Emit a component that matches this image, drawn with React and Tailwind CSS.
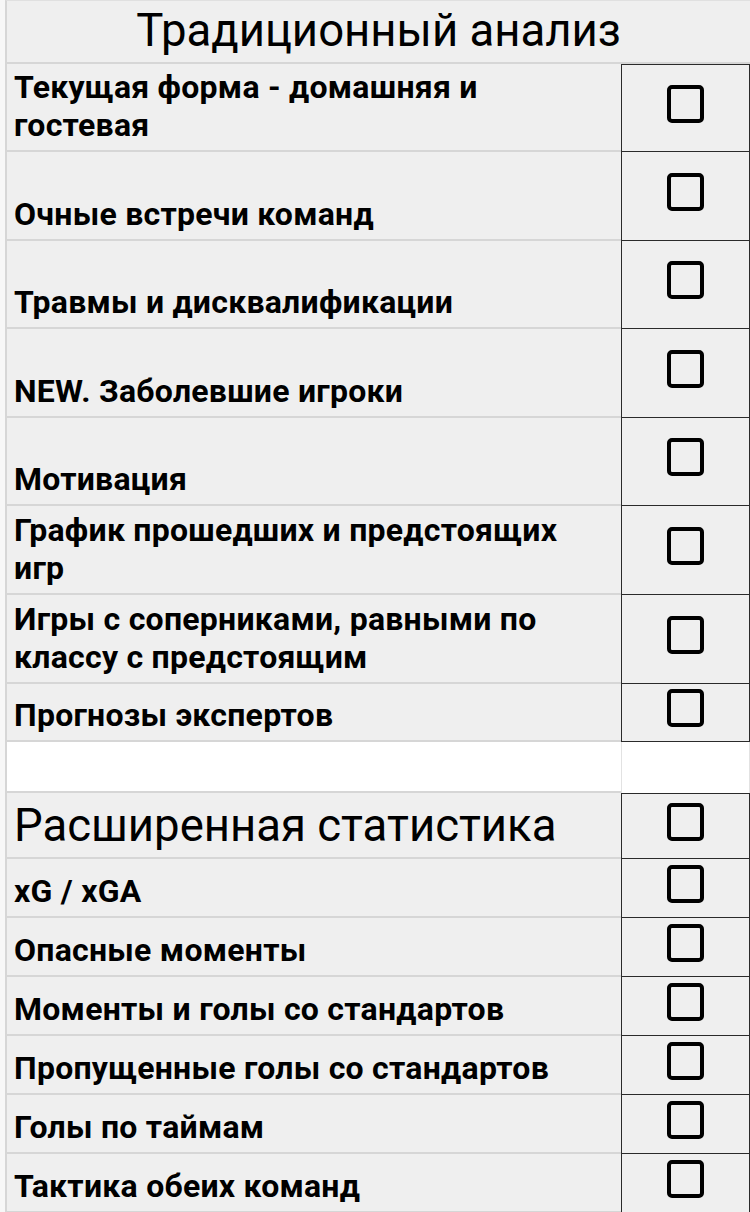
import React from 'react';

const traditional = [
  { label: 'Текущая форма - домашняя и гостевая', h: 'h-[88px]' },
  { label: 'Очные встречи команд', h: 'h-[89px]' },
  { label: 'Травмы и дисквалификации', h: 'h-[88px]' },
  { label: 'NEW. Заболевшие игроки', h: 'h-[89px]' },
  { label: 'Мотивация', h: 'h-[88px]' },
  { label: 'График прошедших и предстоящих игр', h: 'h-[89px]' },
  { label: 'Игры с соперниками, равными по классу с предстоящим', h: 'h-[89px]' },
  { label: 'Прогнозы экспертов', h: 'h-[58px]' },
];

const advanced = [
  'xG / xGA',
  'Опасные моменты',
  'Моменты и голы со стандартов',
  'Пропущенные голы со стандартов',
  'Голы по таймам',
  'Тактика обеих команд',
];

function CheckBox() {
  return <div className="h-[38px] w-[37px] rounded-[5px] border-[4px] border-black" />;
}

function Row({ label, h, big, first }) {
  return (
    <div className={`flex ${h}`}>
      <div className="flex w-[615px] items-end border-b-2 border-[#d6d6d6] bg-[#efefef] pb-[6px] pl-[7px] pr-[40px]">
        <span
          className={
            big
              ? 'text-[45.5px] font-normal leading-[50px] text-black'
              : 'text-[32px] font-bold leading-[38px] tracking-[0.25px] text-black'
          }
        >
          {label}
        </span>
      </div>
      <div
        className={`flex w-[129px] items-center justify-center border-x-[1.5px] border-b-[1.5px] border-[#2a2a2a] bg-[#efefef] pb-[9px] ${
          first ? 'border-t-[1.5px]' : ''
        }`}
      >
        <CheckBox />
      </div>
    </div>
  );
}

export default function App() {
  return (
    <div className="min-h-[1212px] w-[750px] overflow-hidden bg-[#f7f7f7] pl-[5px] font-['Roboto',sans-serif]">
      <div className="border-l-2 border-[#d6d6d6] border-t border-t-[#e0e0e0]">
        <div className="flex h-[63px] w-[744px] items-center justify-center border-b-2 border-r border-[#d6d6d6] bg-[#efefef] pb-[2px]">
          <span className="text-[45.5px] font-normal leading-none text-black">Традиционный анализ</span>
        </div>

        {traditional.map((row, i) => (
          <Row key={row.label} label={row.label} h={row.h} first={i === 0} />
        ))}

        <div className="flex h-[51px] bg-white">
          <div className="w-[615px] border-b-2 border-[#d6d6d6]" />
          <div className="w-[129px] border-x border-[#e2e2e2]" />
        </div>

        <Row label="Расширенная статистика" h="h-[66px]" big first />
        {advanced.map((label) => (
          <Row key={label} label={label} h="h-[59px]" />
        ))}
      </div>
    </div>
  );
}
